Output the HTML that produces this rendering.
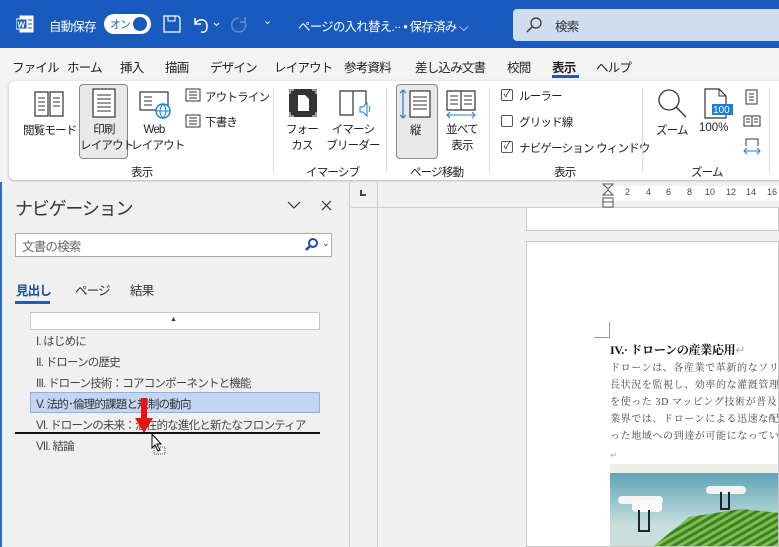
<!DOCTYPE html>
<html><head><meta charset="utf-8"><style>
*{margin:0;padding:0;box-sizing:border-box}
html,body{width:779px;height:547px;overflow:hidden}
body{position:relative;background:#f0f0f0;font-family:"Liberation Sans","Noto Sans CJK JP",sans-serif;color:#222}
.a{position:absolute;white-space:nowrap}
.t12{font-size:11.5px;letter-spacing:-0.8px}
.t13{font-size:12.5px;letter-spacing:-0.8px}
</style></head><body>
<!-- title bar -->
<div class="a" style="left:0;top:0;width:779px;height:48px;background:#185abd"></div>
<svg class="a" style="left:16px;top:15px" width="18" height="18"><rect x="4" y="1" width="13" height="16" fill="#fff" stroke="#fff"/><rect x="0" y="4" width="11" height="10" fill="#185abd" stroke="#fff"/><text x="1.5" y="12.5" font-size="8" font-weight="bold" fill="#fff" font-family="Liberation Sans">W</text><path d="M12 5h4M12 9h4M12 13h4" stroke="#185abd"/></svg>
<div class="a t13" style="left:49px;top:16px;color:#fff">自動保存</div>
<div class="a" style="left:104px;top:14px;width:47px;height:20px;border-radius:10px;background:#fff"></div>
<div class="a" style="left:110px;top:16px;font-size:11px;letter-spacing:-1px;color:#185abd">オン</div>
<div class="a" style="left:133px;top:17px;width:14px;height:14px;border-radius:7px;background:#185abd"></div>
<svg class="a" style="left:163px;top:15px" width="18" height="18"><path d="M1 1h14l2 2v14H1z" fill="none" stroke="#fff" stroke-width="1.3"/><path d="M5 1v5h7V1" fill="none" stroke="#fff"/></svg>
<svg class="a" style="left:191px;top:14px" width="30" height="20"><path d="M4 4v6h6M4 10c3-6 12-6 12 2s-5 6-6 6" fill="none" stroke="#fff" stroke-width="1.5"/><path d="M23 9l2.5 2.5L28 9" fill="none" stroke="#fff"/></svg>
<svg class="a" style="left:229px;top:14px" width="20" height="20"><path d="M10 4a7 7 0 1 0 6 4M16 3v5h-5" fill="none" stroke="#6f8fc8" stroke-width="1.4"/></svg>
<div class="a" style="left:263px;top:14px;color:#fff;font-size:11px">⌄</div>
<div class="a t13" style="left:298px;top:16px;color:#fff">ページの入れ替え.··  •  保存済み ⌵</div>
<div class="a" style="left:513px;top:9px;width:266px;height:32px;background:#d0dcef;border-radius:4px 0 0 4px"></div>
<svg class="a" style="left:526px;top:17px" width="16" height="16"><circle cx="10" cy="6" r="5" fill="none" stroke="#333" stroke-width="1.2"/><path d="M6 10L1 15" stroke="#333" stroke-width="1.4"/></svg>
<div class="a t13" style="left:555px;top:16px;color:#333">検索</div>
<!-- tabs -->
<div class="a" style="left:0;top:48px;width:779px;height:134px;background:#f3f3f3"></div>
<div class="a t13" style="top:57px;left:12px">ファイル</div>
<div class="a t13" style="top:57px;left:67px">ホーム</div>
<div class="a t13" style="top:57px;left:120px">挿入</div>
<div class="a t13" style="top:57px;left:165px">描画</div>
<div class="a t13" style="top:57px;left:210px">デザイン</div>
<div class="a t13" style="top:57px;left:274px">レイアウト</div>
<div class="a t13" style="top:57px;left:344px">参考資料</div>
<div class="a t13" style="top:57px;left:415px">差し込み文書</div>
<div class="a t13" style="top:57px;left:507px">校閲</div>
<div class="a t13" style="top:57px;left:552px;font-weight:bold">表示</div>
<div class="a" style="top:75px;left:552px;width:27px;height:3px;background:#185abd"></div>
<div class="a t13" style="top:57px;left:596px">ヘルプ</div>
<!-- ribbon -->
<div class="a" style="left:9px;top:81px;width:780px;height:99px;background:#fff;border-radius:6px;box-shadow:0 1px 3px rgba(0,0,0,.25)"></div>
<div class="a" style="left:79px;top:84px;width:49px;height:75px;background:#e9e9e9;border:1px solid #888;border-radius:4px"></div>
<svg class="a" style="left:33px;top:90px" width="32" height="28"><path d="M2 2h13v24H2zM17 2h13v24H17z" fill="none" stroke="#333" stroke-width="1.2"/><path d="M5 8h7M5 12h7M5 16h7M5 20h7M20 8h7M20 12h7M20 16h7" stroke="#333"/></svg>
<svg class="a" style="left:92px;top:88px" width="24" height="30"><rect x="1" y="1" width="22" height="28" fill="#fff" stroke="#333" stroke-width="1.2"/><path d="M5 7h14M5 11h14M5 15h14M5 19h14M5 23h14" stroke="#333"/></svg>
<svg class="a" style="left:138px;top:90px" width="34" height="30"><rect x="2" y="2" width="28" height="18" fill="none" stroke="#333" stroke-width="1.2"/><path d="M6 7h8M6 11h8M6 15h8" stroke="#333"/><circle cx="25" cy="21" r="7" fill="#fff" stroke="#1a7fd4" stroke-width="1.4"/><path d="M18 21h14M25 14c-4 4-4 10 0 14M25 14c4 4 4 10 0 14" fill="none" stroke="#1a7fd4"/></svg>
<svg class="a" style="left:185px;top:88px" width="16" height="14"><rect x="1" y="1" width="14" height="12" fill="none" stroke="#333"/><path d="M4 4h8M4 7h8M4 10h8" stroke="#333"/></svg>
<div class="a t12" style="left:205px;top:89px">アウトライン</div>
<svg class="a" style="left:185px;top:114px" width="16" height="14"><rect x="1" y="1" width="14" height="12" fill="none" stroke="#333"/><path d="M4 4h8M4 7h8M4 10h8" stroke="#333"/></svg>
<div class="a t12" style="left:205px;top:114px">下書き</div>
<div class="a t12" style="left:23px;top:122px">閲覧モード</div>
<div class="a t12" style="left:80px;top:122px;text-align:center;line-height:16px;width:48px">印刷<br>レイアウト</div>
<div class="a t12" style="left:131px;top:122px;text-align:center;line-height:16px;width:46px">Web<br>レイアウト</div>
<div class="a t12" style="left:131px;top:164px">表示</div>
<div class="a" style="left:273px;top:88px;width:1px;height:85px;background:#ddd"></div>
<svg class="a" style="left:289px;top:89px" width="28" height="28"><rect x="0" y="0" width="28" height="28" fill="#333"/><path d="M9 6h7l4 4v12H9z" fill="#fff"/><path d="M1 5V1h4M27 5V1h-4M1 23v4h4M27 23v4h-4" stroke="#fff" fill="none"/></svg>
<svg class="a" style="left:338px;top:89px" width="34" height="30"><path d="M2 2h13v24H2zM15 2h13v14" fill="none" stroke="#333" stroke-width="1.2"/><path d="M22 18h3l4-4v13l-4-4h-3z" fill="#fff" stroke="#1a7fd4"/><path d="M31 17c1 2 1 4 0 6" stroke="#1a7fd4" fill="none"/></svg>
<div class="a t12" style="left:284px;top:122px;line-height:16px;text-align:center;width:36px">フォー<br>カス</div>
<div class="a t12" style="left:325px;top:122px;line-height:16px;text-align:center;width:56px">イマーシ<br>ブリーダー</div>
<div class="a t12" style="left:306px;top:164px">イマーシブ</div>
<div class="a" style="left:386px;top:88px;width:1px;height:85px;background:#ddd"></div>
<div class="a" style="left:396px;top:84px;width:42px;height:75px;background:#e9e9e9;border:1px solid #888;border-radius:4px"></div>
<svg class="a" style="left:399px;top:88px" width="34" height="32"><path d="M4 2v28M1 5l3-3 3 3M1 27l3 3 3-3" fill="none" stroke="#1a7fd4" stroke-width="1.2"/><rect x="11" y="3" width="20" height="26" fill="#fff" stroke="#333" stroke-width="1.2"/><path d="M14 9h14M14 13h14M14 17h14M14 21h14" stroke="#333"/></svg>
<svg class="a" style="left:445px;top:90px" width="34" height="30"><path d="M2 1h14v19H2zM16 1h14v19H16z" fill="none" stroke="#333" stroke-width="1.2"/><path d="M5 6h8M5 10h8M5 14h8M19 6h8M19 10h8M19 14h8" stroke="#333"/><path d="M2 25h28M5 22l-3 3 3 3M27 22l3 3-3 3" fill="none" stroke="#1a7fd4"/></svg>
<div class="a t12" style="left:410px;top:122px">縦</div>
<div class="a t12" style="left:443px;top:122px;line-height:16px;text-align:center;width:38px">並べて<br>表示</div>
<div class="a t12" style="left:410px;top:164px">ページ移動</div>
<div class="a" style="left:489px;top:88px;width:1px;height:85px;background:#ddd"></div>
<div class="a" style="left:501px;top:89px;width:12px;height:12px;border:1px solid #555;border-radius:2px;font-size:10px;line-height:10px;text-align:center">✓</div>
<div class="a t12" style="left:519px;top:88px">ルーラー</div>
<div class="a" style="left:501px;top:115px;width:12px;height:12px;border:1px solid #555;border-radius:2px"></div>
<div class="a t12" style="left:519px;top:114px">グリッド線</div>
<div class="a" style="left:501px;top:141px;width:12px;height:12px;border:1px solid #555;border-radius:2px;font-size:10px;line-height:10px;text-align:center">✓</div>
<div class="a t12" style="left:519px;top:140px">ナビゲーション ウィンドウ</div>
<div class="a t12" style="left:554px;top:164px">表示</div>
<div class="a" style="left:642px;top:88px;width:1px;height:85px;background:#ddd"></div>
<svg class="a" style="left:656px;top:88px" width="34" height="32"><circle cx="13" cy="12" r="10" fill="none" stroke="#333" stroke-width="1.3"/><path d="M20 19l10 10" stroke="#333" stroke-width="1.3"/></svg>
<svg class="a" style="left:704px;top:88px" width="30" height="32"><path d="M1 1h14l7 7v22H1z" fill="#fff" stroke="#333" stroke-width="1.2"/><path d="M15 1v7h7" fill="none" stroke="#333"/><rect x="8" y="16" width="21" height="11" fill="#1a7fd4"/><text x="9" y="25" font-size="10" fill="#fff" font-family="Liberation Sans">100</text></svg>
<div class="a t12" style="left:656px;top:122px">ズーム</div>
<div class="a t12" style="left:699px;top:122px;letter-spacing:0">100%</div>
<svg class="a" style="left:744px;top:89px" width="16" height="16"><rect x="2" y="1" width="11" height="14" fill="none" stroke="#333"/><path d="M5 5h5M5 8h5M5 11h5" stroke="#333"/></svg>
<svg class="a" style="left:743px;top:115px" width="18" height="12"><rect x="1" y="1" width="16" height="10" fill="none" stroke="#333"/><path d="M9 1v10M3 4h4M3 7h4M11 4h4M11 7h4" stroke="#333"/></svg>
<svg class="a" style="left:743px;top:138px" width="18" height="18"><path d="M3 8V1h12v7" fill="none" stroke="#333"/><path d="M1 13h16M4 10l-3 3 3 3M14 10l3 3-3 3" fill="none" stroke="#1a7fd4"/></svg>
<div class="a t12" style="left:691px;top:164px">ズーム</div>
<div class="a" style="left:769px;top:88px;width:1px;height:85px;background:#ddd"></div>
<!-- nav pane -->
<div class="a" style="left:0;top:182px;width:350px;height:365px;background:#f0f0f0;border-right:1px solid #ccc"></div>
<div class="a" style="left:0;top:182px;width:2px;height:365px;background:#2b6cc4"></div>
<div class="a" style="left:15px;top:195px;font-size:18px;letter-spacing:-1.2px;color:#333">ナビゲーション</div>
<svg class="a" style="left:287px;top:200px" width="14" height="10"><path d="M1 2l6 6 6-6" fill="none" stroke="#333" stroke-width="1.2"/></svg>
<svg class="a" style="left:321px;top:200px" width="11" height="11"><path d="M1 1l9 9M10 1l-9 9" stroke="#333" stroke-width="1.2"/></svg>
<div class="a" style="left:15px;top:233px;width:317px;height:24px;background:#fff;border:1px solid #aaa"></div>
<div class="a t13" style="left:22px;top:236px;color:#666">文書の検索</div>
<svg class="a" style="left:305px;top:238px" width="14" height="14"><circle cx="8" cy="5" r="4" fill="none" stroke="#1e4e9c" stroke-width="2"/><path d="M5 8L1 12" stroke="#1e4e9c" stroke-width="2.5"/></svg>
<div class="a" style="left:322px;top:238px;font-size:9px;color:#333">⌄</div>
<div class="a t13" style="left:16px;top:280px;color:#1e4e9c;font-weight:bold">見出し</div>
<div class="a" style="left:15px;top:301px;width:35px;height:3px;background:#1e5eb8"></div>
<div class="a t13" style="left:75px;top:280px;color:#333">ページ</div>
<div class="a t13" style="left:130px;top:280px;color:#333">結果</div>
<div class="a" style="left:30px;top:312px;width:290px;height:18px;background:#fff;border:1px solid #c8c8c8"></div>
<div class="a" style="left:170px;top:316px;font-size:7px;color:#333">▲</div>
<div class="a t12" style="left:36px;top:333px;color:#444">I. はじめに</div>
<div class="a t12" style="left:36px;top:354px;color:#444">II. ドローンの歴史</div>
<div class="a t12" style="left:36px;top:375px;color:#444">III. ドローン技術：コアコンポーネントと機能</div>
<div class="a" style="left:30px;top:392px;width:290px;height:21px;background:#c3d5f0;border:1px solid #8fb0de"></div>
<div class="a t12" style="left:36px;top:396px;color:#333">V. 法的･倫理的課題と規制の動向</div>
<div class="a t12" style="left:36px;top:417px;color:#444">VI. ドローンの未来：潜在的な進化と新たなフロンティア</div>
<div class="a" style="left:15px;top:432px;width:305px;height:2px;background:#111"></div>
<div class="a t12" style="left:36px;top:438px;color:#444">VII. 結論</div>
<svg class="a" style="left:134px;top:398px" width="20" height="36"><path d="M7 0h6v20h6L10 35 1 20h6z" fill="#f01010"/></svg>
<svg class="a" style="left:150px;top:433px" width="18" height="22"><path d="M2 1v14l3-3 3 6 2-1-3-6h4z" fill="#fff" stroke="#000"/><rect x="4" y="14" width="11" height="7" fill="none" stroke="#555" stroke-dasharray="1 1"/></svg>
<!-- ruler area -->
<div class="a" style="left:351px;top:182px;width:428px;height:26px;background:#f0f0f0;border-bottom:1px solid #ccc"></div>
<div class="a" style="left:377px;top:182px;width:1px;height:365px;background:#ccc"></div>
<div class="a" style="left:360px;top:190px;width:6px;height:6px;border-left:2px solid #444;border-bottom:2px solid #444"></div>
<div class="a" style="left:606px;top:186px;width:173px;height:15px;background:#fff"></div>
<svg class="a" style="left:602px;top:183px" width="12" height="26"><path d="M1 1h10l-5 5zM6 7l5 5H1z" fill="#fff" stroke="#555"/><rect x="1" y="15" width="10" height="9" fill="#fff" stroke="#555"/><path d="M1 19h10" stroke="#555"/></svg>
<div class="a" style="left:625px;top:187px;font-size:9px;color:#444">2</div>
<div class="a" style="left:646px;top:187px;font-size:9px;color:#444">4</div>
<div class="a" style="left:666px;top:187px;font-size:9px;color:#444">6</div>
<div class="a" style="left:687px;top:187px;font-size:9px;color:#444">8</div>
<div class="a" style="left:705px;top:187px;font-size:9px;color:#444">10</div>
<div class="a" style="left:726px;top:187px;font-size:9px;color:#444">12</div>
<div class="a" style="left:746px;top:187px;font-size:9px;color:#444">14</div>
<div class="a" style="left:767px;top:187px;font-size:9px;color:#444">16</div>
<!-- pages -->
<div class="a" style="left:526px;top:208px;width:253px;height:23px;background:#fff;border:1px solid #c8c8c8;border-top:none"></div>
<div class="a" style="left:526px;top:241px;width:253px;height:306px;background:#fff;border:1px solid #c8c8c8;overflow:hidden">
<div class="a" style="left:67px;top:80px;width:16px;height:16px;border-right:1px solid #999;border-bottom:1px solid #999"></div>
<div class="a" style="left:83px;top:99px;font-size:12px;font-weight:bold;font-family:'Liberation Serif','Noto Serif CJK SC',serif;color:#111;letter-spacing:-0.3px">IV.· ドローンの産業応用<span style="color:#aaa;font-weight:normal">↵</span></div>
<div class="a" style="left:83px;top:118px;font-size:10px;line-height:17px;color:#444;font-family:'Liberation Serif','Noto Serif CJK SC',serif;letter-spacing:0.6px">ドローンは、各産業で革新的なソリュ<br>長状況を監視し、効率的な灌漑管理や<br>を使った 3D マッピング技術が普及し<br>業界では、ドローンによる迅速な配達<br>った地域への到達が可能になってい</div>
<div class="a" style="left:83px;top:208px;font-size:9px;color:#aaa">↵</div>
<div class="a" style="left:83px;top:222px;width:170px;height:84px;background:#efefe8;overflow:hidden">
<div style="position:absolute;left:0;top:9px;width:170px;height:75px;background:linear-gradient(#5ea4b8,#c8dfdc 70%)"></div>
<div style="position:absolute;left:40px;top:45px;width:130px;height:40px;background:repeating-linear-gradient(150deg,#3f7f2a 0 3px,#7cc04c 3px 6px);clip-path:polygon(0 100%,30% 20%,70% 0,100% 10%,100% 100%)"></div>
<div style="position:absolute;left:8px;top:32px;width:45px;height:8px;background:#f4f4f4;border-radius:4px"></div>
<div style="position:absolute;left:22px;top:36px;width:30px;height:12px;background:#fafafa;border-radius:4px"></div>
<div style="position:absolute;left:28px;top:46px;width:12px;height:22px;border:2px solid #223;border-top:none"></div>
<div style="position:absolute;left:96px;top:22px;width:40px;height:8px;background:#f4f4f4;border-radius:4px"></div>
<div style="position:absolute;left:110px;top:28px;width:10px;height:18px;border:2px solid #223;border-top:none"></div>
</div>
</div>
</body></html>
